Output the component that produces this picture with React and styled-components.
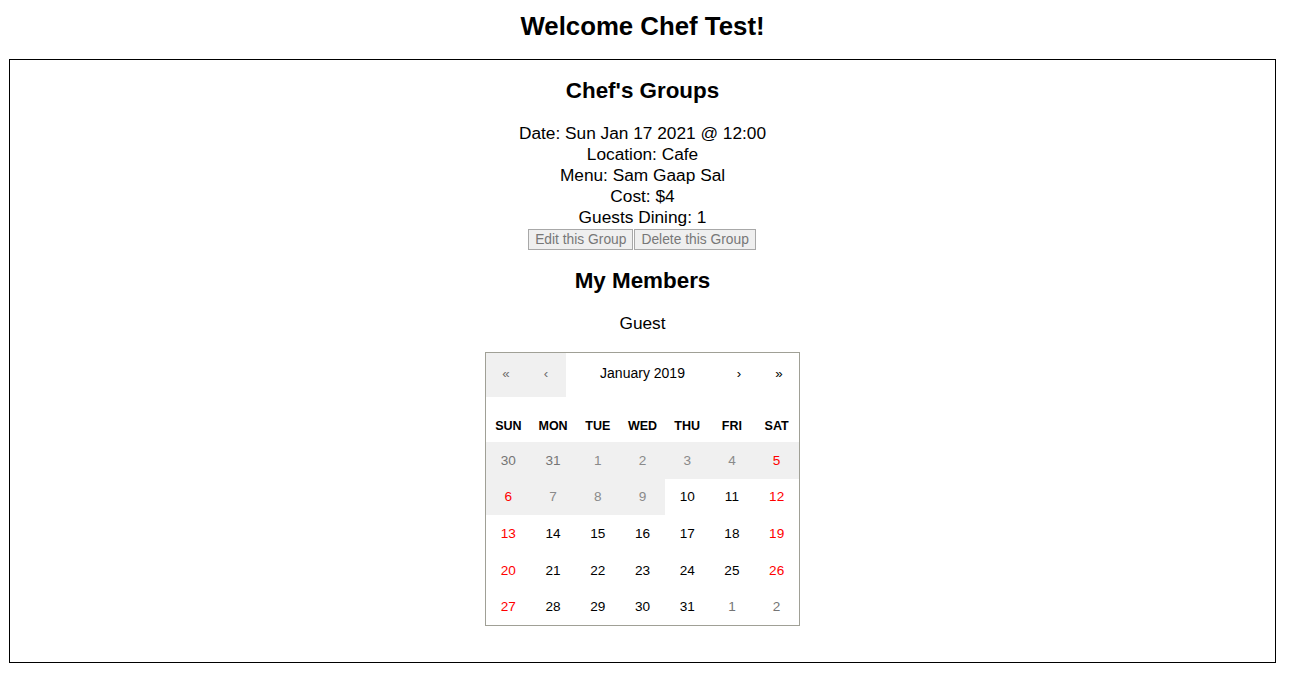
import React from 'react'
import styled, {createGlobalStyle} from 'styled-components'

const GlobalStyle = createGlobalStyle`
    body {
        margin: 0;
        background: white;
        font-family: "Liberation Sans", Arial, sans-serif;
        color: black;
    }
`

const weekdays = ['Sun', 'Mon', 'Tue', 'Wed', 'Thu', 'Fri', 'Sat']

// each day: [label, neighbouring month, disabled]
const buildDays = () => {
    const days = [[30, true, true], [31, true, true]]
    for (let d = 1; d <= 31; d++) days.push([d, false, d < 10])
    days.push([1, true, false], [2, true, false])
    return days
}

export default function App(){
    const days = buildDays()
    return(
        <Page>
            <GlobalStyle />
            <Title>Welcome Chef Test!</Title>
            <Frame>
                <SubTitle>Chef's Groups</SubTitle>
                <Details>
                    <div>Date: Sun Jan 17 2021 @ 12:00</div>
                    <div>Location: Cafe</div>
                    <div>Menu: Sam Gaap Sal</div>
                    <div>Cost: $4</div>
                    <div>Guests Dining: 1</div>
                </Details>
                <Actions>
                    <Button disabled>Edit this Group</Button>
                    <Button disabled>Delete this Group</Button>
                </Actions>
                <SubTitle second>My Members</SubTitle>
                <Member>Guest</Member>
                <Calendar>
                    <Navigation>
                        <NavButton disabled>«</NavButton>
                        <NavButton disabled>‹</NavButton>
                        <NavLabel>January 2019</NavLabel>
                        <NavButton>›</NavButton>
                        <NavButton>»</NavButton>
                    </Navigation>
                    <Weekdays>
                        {weekdays.map(w => <Weekday key={w}>{w}</Weekday>)}
                    </Weekdays>
                    <Days>
                        {days.map(([label, neighbour, disabled], i) =>
                            <Tile
                                key={i}
                                $weekend={i % 7 === 0 || i % 7 === 6}
                                $neighbour={neighbour}
                                $disabled={disabled}
                            >{label}</Tile>
                        )}
                    </Days>
                </Calendar>
            </Frame>
        </Page>
    )
}

const Page = styled.div`
    width: 1267px;
    margin-left: 9px;
    padding-top: 10px;
`

const Title = styled.h2`
    margin: 0 0 17px;
    text-align: center;
    font-size: 25.8px;
    line-height: 32px;
    font-weight: bold;
`

const Frame = styled.div`
    border: 1px solid black;
    display: flex;
    flex-direction: column;
    align-items: center;
    padding: 17px 0 36px;
`

const SubTitle = styled.h3`
    margin: ${p => p.second ? '17px 0 0' : '0 0 18px'};
    font-size: 22.4px;
    line-height: 28px;
    font-weight: bold;
`

const Details = styled.div`
    text-align: center;
    font-size: 17.3px;
    line-height: 21px;
`

const Actions = styled.div`
    display: flex;
    margin-top: 1px;
`

const Button = styled.button`
    font-family: "Liberation Sans", Arial, sans-serif;
    font-size: 13.8px;
    line-height: 15px;
    padding: 1px 6px;
    color: #777;
    background-color: #efefef;
    border: 1px solid #a8a8a8;
    border-radius: 0;
    height: 21px;
    margin: 0 1px 0 0;
`

const Member = styled.div`
    margin: 18px 0 18px;
    font-size: 17.3px;
    line-height: 21px;
`

const Calendar = styled.div`
    width: 313px;
    border: 1px solid #a0a096;
    background: white;
    font-family: "Liberation Sans", Arial, sans-serif;
`

const Navigation = styled.div`
    display: flex;
    height: 44px;
    margin-bottom: 16px;
`

const NavButton = styled.button`
    width: 40px;
    border: none;
    padding: 0 0 4px;
    margin: 0;
    font-family: inherit;
    font-size: 13.33px;
    color: ${p => p.disabled ? '#6d6d6d' : 'black'};
    background-color: ${p => p.disabled ? '#f0f0f0' : 'transparent'};
`

const NavLabel = styled.button`
    flex: 1;
    border: none;
    padding: 0 0 4px;
    margin: 0;
    background: none;
    font-family: inherit;
    font-size: 14px;
    color: black;
`

const Weekdays = styled.div`
    display: grid;
    grid-template-columns: repeat(7, 1fr);
    height: 29px;
`

const Weekday = styled.div`
    text-align: center;
    text-transform: uppercase;
    font-weight: bold;
    font-size: 12.5px;
    line-height: 27px;
`

const Days = styled.div`
    display: grid;
    grid-template-columns: repeat(7, 1fr);
    grid-auto-rows: 36.6px;
`

const Tile = styled.div`
    display: flex;
    align-items: center;
    justify-content: center;
    font-size: 13.6px;
    background-color: ${p => p.$disabled ? '#f0f0f0' : 'white'};
    color: ${p => p.$neighbour
        ? '#757575'
        : p.$weekend ? '#ff0000' : p.$disabled ? '#8a8a8a' : 'black'};
`
